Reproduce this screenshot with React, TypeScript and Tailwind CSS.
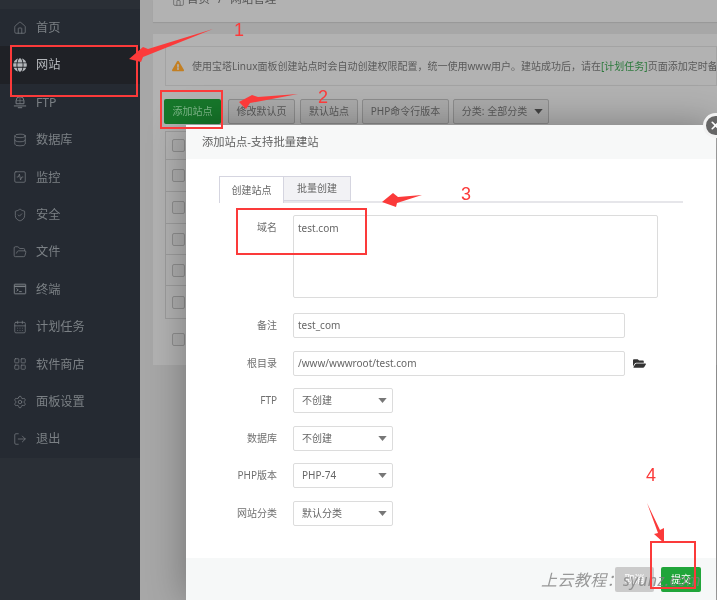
import React from "react";
import { House, Database, SquareActivity, ShieldCheck, FolderOpen, CalendarDays, LayoutGrid, Settings, LogOut, X } from "lucide-react";
import { FaExclamationTriangle, FaFolderOpen, FaGlobe } from "react-icons/fa";

const FtpIcon = ({ className }: { className?: string }) => (
  <svg viewBox="0 0 16 16" className={className} fill="none" stroke="currentColor" strokeWidth="1.1">
    <path d="M3.5 10V6.5a4.5 4.5 0 0 1 9 0V10z" />
    <path d="M8 2.5V10M3.5 6.5h9" strokeWidth="0.7" />
    <path d="M1 12.5h14M5.5 14.5h5" />
  </svg>
);

const TermIcon = ({ className }: { className?: string }) => (
  <svg viewBox="0 0 16 16" className={className} fill="none" stroke="currentColor" strokeWidth="1.1">
    <rect x="1.5" y="2.5" width="13" height="11" rx="0.5" />
    <path d="M1.5 5h13" strokeWidth="1.6" />
    <path d="M4 7.5l2 1.5-2 1.5M7 11h3" />
  </svg>
);

const items: { label: string; icon: React.ComponentType<{ className?: string; strokeWidth?: number }>; active?: boolean }[] = [
  { label: "首页", icon: House },
  { label: "网站", icon: FaGlobe, active: true },
  { label: "FTP", icon: FtpIcon },
  { label: "数据库", icon: Database },
  { label: "监控", icon: SquareActivity },
  { label: "安全", icon: ShieldCheck },
  { label: "文件", icon: FolderOpen },
  { label: "终端", icon: TermIcon },
  { label: "计划任务", icon: CalendarDays },
  { label: "软件商店", icon: LayoutGrid },
  { label: "面板设置", icon: Settings },
  { label: "退出", icon: LogOut },
];

const Checkbox = () => <div className="w-[13px] h-[13px] border border-[#8e8e8e] rounded-[2px] bg-[#adadad]" />;

const Caret = ({ className }: { className?: string }) => (
  <svg viewBox="0 0 10 6" className={className} fill="currentColor"><path d="M0 0h10L5 6z" /></svg>
);

const ToolBtn = ({ children, className }: { children: React.ReactNode; className: string }) => (
  <div className={`h-[25px] flex items-center justify-center whitespace-nowrap border border-[#8d8d8d] rounded-[2px] bg-[#ababab] text-[#5a5a5a] text-[10px] ${className}`}>{children}</div>
);

const Row = ({ label, children, className = "mt-[12.5px]" }: { label: string; children: React.ReactNode; className?: string }) => (
  <div className={`flex items-start ${className}`}>
    <div className="w-[91px] h-[25px] leading-[25px] text-right text-[10px] text-[#707070]">{label}</div>
    <div className="ml-[16px] flex items-center">{children}</div>
  </div>
);

const Field = ({ value, className }: { value: string; className: string }) => (
  <div className={`h-[25px] flex items-center pl-[4px] border border-[#dcdcdc] rounded-[2px] text-[10px] text-[#666] ${className}`}>{value}</div>
);

const SelectBox = ({ value }: { value: string }) => (
  <div className="w-[100px] h-[25px] flex items-center justify-between pl-[8px] pr-[5px] border border-[#dcdcdc] rounded-[2px] text-[10px] text-[#666]">
    <span>{value}</span>
    <Caret className="w-[9px] h-[5px] text-[#777]" />
  </div>
);

const Box = ({ className }: { className: string }) => <div className={`absolute border-[2.5px] border-[#fb3a3a] ${className}`} />;
const Num = ({ children, className }: { children: React.ReactNode; className: string }) => (
  <div className={`absolute text-[#fb3a3a] text-[18px] leading-none font-['Liberation_Sans',sans-serif] ${className}`}>{children}</div>
);

export default function App() {
  return (
    <div className="relative w-[717px] h-[600px] overflow-hidden flex bg-[#a7a7a7] blur-[0.35px] font-['Noto_Sans','Noto_Sans_CJK_SC',sans-serif]">
      <aside className="w-[140px] shrink-0 h-full flex flex-col bg-[#2a2f36]">
        <div className="h-[9px]" />
        <div className="bg-[#252a32]">
          {items.map((it) => {
            const Icon = it.icon;
            return (
              <div key={it.label} className={`h-[37.4px] flex items-center pl-[13px] ${it.active ? "bg-[#1f2126] text-[#b4b7bb]" : "text-[#7b8085]"}`}>
                <Icon className="w-[14px] h-[14px] shrink-0" strokeWidth={1.2} />
                <span className="ml-[9px] text-[12.2px] pt-[1px]">{it.label}</span>
              </div>
            );
          })}
        </div>
      </aside>

      <main className="flex-1 min-w-0 pl-[13px] flex flex-col">
        <div className="h-[22px] bg-[#b2b2b2] shadow-[0_1px_1px_rgba(0,0,0,0.08)] flex items-end pb-[15px] pl-[19px] text-[11.5px] leading-[16px] text-[#555] whitespace-nowrap">
          <House className="w-[13px] h-[13px] mr-[2px]" strokeWidth={1.2} />
          首页<span className="mx-[8px]">/</span>网站管理
        </div>
        <section className="mt-[12px] h-[331px] bg-[#b2b2b2] pt-[12px] pl-[12px] overflow-hidden">
          <div className="h-[40px] flex items-center border border-[#a3a3a3] pl-[6px] whitespace-nowrap overflow-hidden text-[10px] text-[#5a5a5a]">
            <FaExclamationTriangle className="w-[12px] h-[12px] text-[#c37f22] shrink-0" />
            <span className="ml-[8px]">使用宝塔Linux面板创建站点时会自动创建权限配置，统一使用www用户。建站成功后，请在<span className="text-[#2d7a3d]">[计划任务]</span>页面添加定时备份，以保证数据安全。</span>
          </div>
          <div className="mt-[13px] flex items-center">
            <div className="w-[57px] h-[25px] flex items-center justify-center rounded-[2px] bg-[#17782b] text-[#7fb98a] text-[10px] ml-[-1px]">添加站点</div>
            <ToolBtn className="w-[67px] ml-[7px]">修改默认页</ToolBtn>
            <ToolBtn className="w-[58px] ml-[5px]">默认站点</ToolBtn>
            <ToolBtn className="w-[87px] ml-[4px]">PHP命令行版本</ToolBtn>
            <ToolBtn className="w-[96px] ml-[4px] pl-[3px]">
              分类: 全部分类
              <Caret className="w-[9px] h-[5px] ml-[7px] text-[#444]" />
            </ToolBtn>
          </div>
          <div className="mt-[7px] border border-[#9c9c9c] border-r-0 w-[300px]">
            {[28, 32, 32, 31, 31, 32].map((h, i) => (
              <div key={i} style={{ height: h }} className="flex items-center pl-[6px] border-b border-[#9c9c9c] last:border-b-0">
                <Checkbox />
              </div>
            ))}
          </div>
          <div className="mt-[14px] pl-[7px]">
            <Checkbox />
          </div>
        </section>
      </main>

      {/* Dialog */}
      <div className="absolute left-[186px] top-[125px] w-[530px] h-[475px] bg-white flex flex-col shadow-[0_0_36px_rgba(0,0,0,0.32)]">
        <div className="h-[34px] shrink-0 bg-[#f7f8f8] pl-[16px] flex items-center text-[11.3px] text-[#5f5f5f]">添加站点-支持批量建站</div>
        <div className="pt-[17px] pl-[33px]">
          <div className="w-[464px] h-[27px] flex border-b-2 border-[#e6e6ea]">
            <div className="w-[65px] h-[27px] flex items-center justify-center border border-b-0 border-[#d5d5e0] bg-white text-[10px] text-[#666]">创建站点</div>
            <div className="w-[67px] h-[25px] flex items-center justify-center border border-l-0 border-[#d5d5e0] bg-[#f2f2f5] text-[10px] text-[#666]">批量创建</div>
          </div>
        </div>
        <div className="pt-[12px]">
          <Row label="域名" className="">
            <div className="w-[365px] h-[83px] border border-[#dcdcdc] rounded-[2px] pl-[4px] pt-[3px] text-[10px] leading-[18px] text-[#666]">test.com</div>
          </Row>
          <Row label="备注" className="mt-[15px]">
            <Field value="test_com" className="w-[332px]" />
          </Row>
          <Row label="根目录">
            <Field value="/www/wwwroot/test.com" className="w-[332px]" />
            <FaFolderOpen className="ml-[8px] w-[13px] h-[13px] text-[#333]" />
          </Row>
          <Row label="FTP"><SelectBox value="不创建" /></Row>
          <Row label="数据库"><SelectBox value="不创建" /></Row>
          <Row label="PHP版本"><SelectBox value="PHP-74" /></Row>
          <Row label="网站分类"><SelectBox value="默认分类" /></Row>
        </div>
        <div className="mt-auto h-[42px] shrink-0 bg-[#f6f8f8] flex items-center justify-end gap-[7px] pr-[15px] pt-[1px]">
          <div className="w-[39px] h-[25px] rounded-[2px] bg-[#cbcbcb] text-white text-[10px] flex items-center justify-center">取消</div>
          <div className="w-[40px] h-[25px] rounded-[2px] bg-[#20a53a] text-white text-[10px] flex items-center justify-center">提交</div>
        </div>
      </div>

      {/* Close button */}
      <div className="absolute left-[703px] top-[113px] w-[25px] h-[25px] rounded-full bg-[#666] border-[3px] border-[#f2f2f2] flex items-center justify-center">
        <X className="w-[13px] h-[13px] text-white" strokeWidth={3} />
      </div>

      {/* Watermark */}
      <div className="absolute left-[541px] top-[568px] whitespace-nowrap italic text-[16px] leading-[24px] text-[#7f7f7f]/80 tracking-[0.4px]">上云教程：syunz.com</div>

      {/* Annotations */}
      <Box className="left-[10px] top-[45px] w-[128px] h-[52px]" />
      <Box className="left-[160px] top-[90px] w-[63px] h-[39px]" />
      <Box className="left-[236px] top-[208px] w-[131px] h-[47px]" />
      <Box className="left-[650px] top-[541px] w-[46px] h-[48px]" />
      <Num className="left-[234px] top-[21px]">1</Num>
      <Num className="left-[318px] top-[88px]">2</Num>
      <Num className="left-[461px] top-[185px]">3</Num>
      <Num className="left-[646px] top-[466px]">4</Num>
      <svg className="absolute left-0 top-0 w-[717px] h-[600px] pointer-events-none" viewBox="0 0 717 600" fill="#fb3a3a">
        <polygon points="213,29 148,49 143,47 129,59 141,62 143,57" />
        <polygon points="298,94 258,97 252,95 239,102 246,109 250,103" />
        <polygon points="422,195 398,197 393,193 382,202 396,207 397,203" />
        <polygon points="647,503 660,530 664,528 664,543 654,534 658,533" />
      </svg>
    </div>
  );
}
